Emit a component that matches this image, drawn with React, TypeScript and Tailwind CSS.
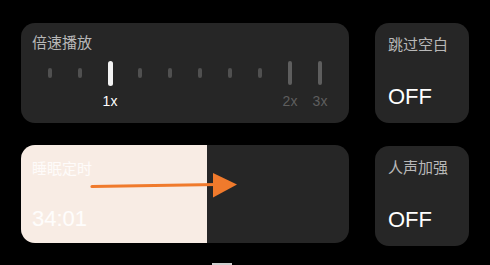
const ticks = [
  { label: "", kind: "small" },
  { label: "", kind: "small" },
  { label: "1x", kind: "active" },
  { label: "", kind: "small" },
  { label: "", kind: "small" },
  { label: "", kind: "small" },
  { label: "", kind: "small" },
  { label: "", kind: "small" },
  { label: "2x", kind: "tall" },
  { label: "3x", kind: "tall" },
];

const font = { fontFamily: '"Liberation Sans", "Noto Sans CJK SC", sans-serif' };

function ToggleCard({ title }: { title: string }) {
  return (
    <div className="flex h-[100px] w-[94px] flex-col justify-between rounded-[14px] bg-[#262626] pb-[14px] pl-[13px] pt-[12px]">
      <div className="text-[15px] leading-[20px] text-[#b8b8b8]">{title}</div>
      <div className="text-[22px] font-medium leading-[24px] text-white">OFF</div>
    </div>
  );
}

export default function App() {
  return (
    <div className="relative h-[265px] w-[490px] overflow-hidden bg-black" style={font}>
      <div className="flex gap-[26px] pl-[21px] pt-[23px]">
        <div className="flex w-[328px] flex-col gap-[22px]">
          {/* speed */}
          <div className="h-[100px] rounded-[14px] bg-[#262626] pl-[11px] pt-[10px]">
            <div className="text-[15px] leading-[20px] text-[#b8b8b8]">倍速播放</div>
            <div className="mt-[8px] flex pl-[3px]">
              {ticks.map((t, i) => (
                <div key={i} className="flex w-[30px] flex-col items-center">
                  <div className="flex h-[24px] items-center">
                    {t.kind === "small" && <div className="h-[10px] w-[4px] rounded-full bg-[#505050]" />}
                    {t.kind === "tall" && <div className="h-[24px] w-[4px] rounded-full bg-[#5e5e5e]" />}
                    {t.kind === "active" && <div className="h-[25px] w-[5px] rounded-full bg-[#f2f2f2]" />}
                  </div>
                  <div
                    className={`mt-[8px] h-[16px] text-[14px] leading-[16px] ${
                      t.kind === "active" ? "text-white" : "text-[#5e5e5e]"
                    }`}
                  >
                    {t.label}
                  </div>
                </div>
              ))}
            </div>
          </div>

          {/* sleep timer */}
          <div className="relative flex h-[98px] overflow-hidden rounded-[14px] bg-[#262626]">
            <div className="flex w-[186px] flex-col justify-between bg-[#f8ece4] pb-[12px] pl-[11px] pt-[14px]">
              <div className="text-[15px] leading-[20px] text-white/80">睡眠定时</div>
              <div className="text-[22px] leading-[24px] text-white/90">34:01</div>
            </div>
            <div className="flex-1" />
            <svg className="absolute left-0 top-0" width="328" height="98" viewBox="0 0 328 98">
              <path d="M71 41.5 L196 39.5" stroke="#f07a2c" strokeWidth="3.2" strokeLinecap="round" />
              <path d="M192 28 L216 39.5 L192 52.5 Z" fill="#f07a2c" />
            </svg>
          </div>
        </div>

        <div className="flex flex-col gap-[23px]">
          <ToggleCard title="跳过空白" />
          <ToggleCard title="人声加强" />
        </div>
      </div>
      <div className="absolute bottom-0 left-[212px] h-[2px] w-[20px] bg-[#cfcfcf]" />
    </div>
  );
}
